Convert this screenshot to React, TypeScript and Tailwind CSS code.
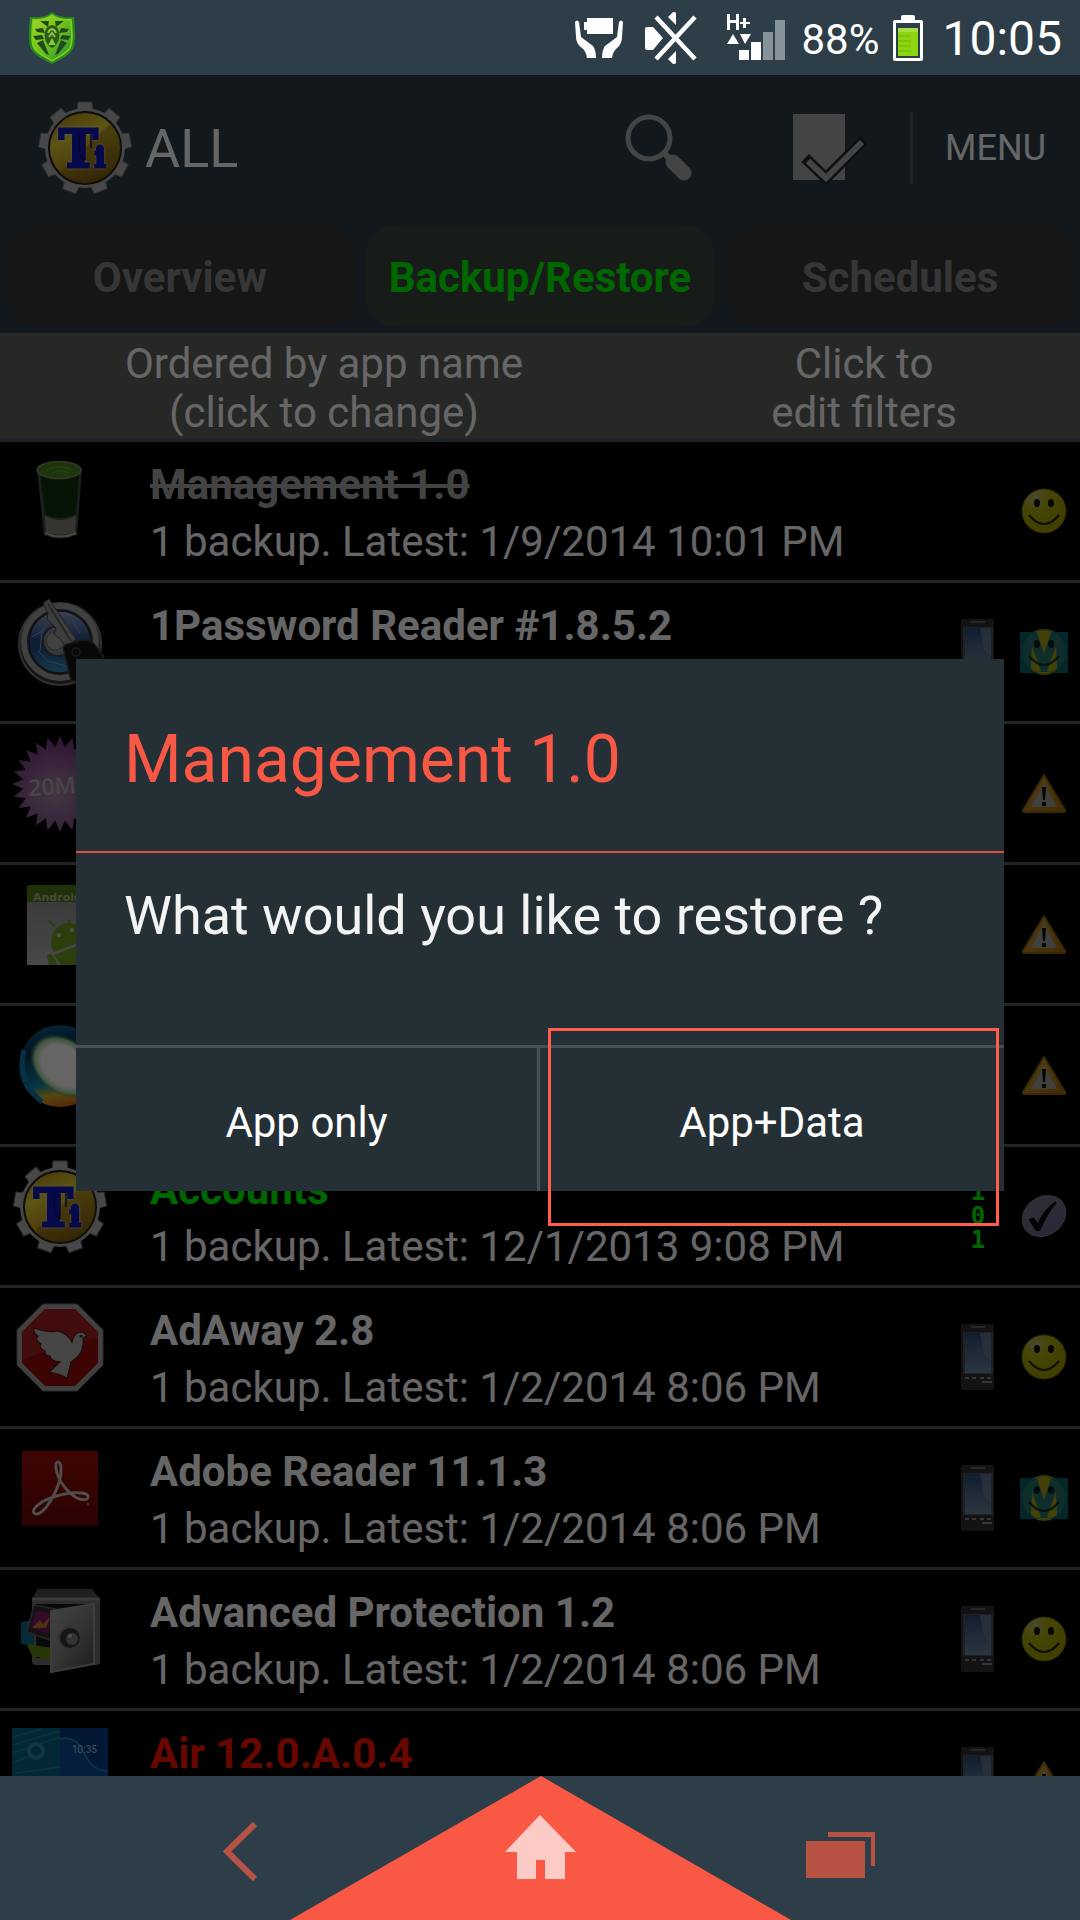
import React from 'react';

/* ---------- geometry helpers ---------- */

function burst(points: number, outer: number, inner: number): string {
  const out: string[] = [];
  for (let i = 0; i < points * 2; i++) {
    const r = i % 2 === 0 ? outer : inner;
    const a = (Math.PI * i) / points - Math.PI / 2;
    out.push(`${(48 + r * Math.cos(a)).toFixed(1)},${(48 + r * Math.sin(a)).toFixed(1)}`);
  }
  return out.join(' ');
}

const GEAR_TEETH = [0, 40, 80, 120, 160, 200, 240, 280, 320];

/* ---------- status bar icons ---------- */

function ShieldIcon() {
  return (
    <svg width="48" height="54" viewBox="0 0 48 54" aria-hidden="true">
      <defs>
        <linearGradient id="shield" x1="0" y1="0" x2="1" y2="1">
          <stop offset="0" stopColor="#a8d820" />
          <stop offset="0.5" stopColor="#6fc01c" />
          <stop offset="1" stopColor="#22902e" />
        </linearGradient>
      </defs>
      <path d="M24 1 C18 6 9 7 2 6 C1 20 0 32 3 38 C8 46 17 49 24 53 C31 49 40 46 45 38 C48 32 47 20 46 6 C39 7 30 6 24 1Z" fill="#2c8a1c" />
      <path d="M24 4 C18 8 11 9 5 8.500 C4 20 3 31 6 37 C10 43 18 46 24 50 C30 46 38 43 42 37 C45 31 44 20 43 8.500 C37 9 30 8 24 4Z" fill="url(#shield)" stroke="#7cd024" strokeWidth="1.500" />
      <path d="M12 10 L21 10 L20 16Z M36 10 L27 10 L28 16Z M7 18 L15 17 L17 22 L9 21Z M41 18 L33 17 L31 22 L39 21Z M5 25 L14 24 L16 28 L8 29Z M43 25 L34 24 L32 28 L40 29Z M9 32 L15 29 L21 44 L18 43Z M39 32 L33 29 L27 44 L30 43Z" fill="#1f4a1c" />
      <path d="M24 14 C17 15 16 22 17 28 C18 33 22 36 24 37 C26 36 30 33 31 28 C32 22 31 15 24 14Z" fill="#2c5a1c" />
      <path d="M20 22 C22 17 26 17 28 22 M21 26 L24 22 L27 26 M22 33 L24 29 L26 33Z" fill="none" stroke="#8cc83a" strokeWidth="2" />
    </svg>
  );
}

function PowerSavingIcon() {
  return (
    <svg width="48" height="40" viewBox="0 0 48 40" aria-hidden="true" fill="#fff">
      <path d="M12 0H38V16H12V12H9V4H12Z" />
      <path d="M0 4Q2 1 4 4L6 19L18 28Q21 32 21 40H12Q11 33 7 30Q1 26 1 19Z" />
      <path d="M48 4Q46 1 44 4L42 19L30 28Q27 32 27 40H37Q38 33 42 30Q47 26 47 19Z" />
    </svg>
  );
}

function MuteIcon() {
  return (
    <svg width="52" height="52" viewBox="0 0 52 52" aria-hidden="true">
      <path d="M0 17Q0 15 2 15H8L18 26L8 38H2Q0 38 0 36Z M23 5L28 0Q31 0 31 1V13Z M23 47L28 52Q31 52 31 51V39Z" fill="#fff" />
      <path d="M11 5L50 47M50 5L11 47" stroke="#fff" strokeWidth="4.500" />
    </svg>
  );
}

function SignalIcon() {
  return (
    <svg width="60" height="48" viewBox="0 0 60 48" aria-hidden="true" fill="#fff">
      <path d="M1 0H4V6H10V0H13V16H10V9H4V16H1Z M17 4H20V8H24V10H20V14H17V10H14V8H17Z" />
      <path d="M1 30L7 20L13 30Z M14 20H25L19 30Z" />
      <path d="M13 36H23V46H13Z M25 28H35V46H25Z" />
      <path d="M37 18H47V46H37Z M49 6H59V46H49Z" fill="#87939a" />
    </svg>
  );
}

function BatteryIcon() {
  return (
    <svg width="30" height="46" viewBox="0 0 30 46" aria-hidden="true">
      <path d="M8 2Q8 0 10 0H20Q22 0 22 2V5H28Q30 5 30 7V44Q30 46 28 46H2Q0 46 0 44V7Q0 5 2 5H8Z" fill="#fff" />
      <path d="M3 8H27V43H3Z" fill="#2d3e48" />
      <path d="M5 13H25V41H5Z" fill="#8ed40f" />
      <path d="M5 13H25V17H5Z" fill="#a9dd45" />
      <path d="M5 21H18M5 26H18M5 31H18M5 36H18" stroke="#6fb80c" />
    </svg>
  );
}

/* ---------- app bar icons ---------- */

function SearchIcon() {
  return (
    <svg width="72" height="72" viewBox="0 0 72 72" aria-hidden="true">
      <circle cx="26" cy="26" r="21" fill="none" stroke="#a8aaaa" strokeWidth="5" />
      <path d="M41 41L46 46" stroke="#a8aaaa" strokeWidth="6" />
      <path d="M50 50L61 61" stroke="#a8aaaa" strokeWidth="15" strokeLinecap="round" />
      <path d="M43 47L47 43" stroke="#a8aaaa" strokeWidth="6" />
    </svg>
  );
}

function BatchIcon() {
  return (
    <svg width="76" height="72" viewBox="0 0 76 72" aria-hidden="true">
      <path d="M2 2H54V68H2Z" fill="#a8aaaa" />
      <path d="M14 46L35 66L73 28" fill="none" stroke="#20292d" strokeWidth="11" />
      <path d="M17 49L35 66L71 30" fill="none" stroke="#a8aaaa" strokeWidth="6" />
    </svg>
  );
}

/* ---------- application icons ---------- */

function TitaniumIcon({ id }: { id: string }) {
  return (
    <svg viewBox="0 0 96 96" className="size-24 shrink-0" aria-hidden="true">
      <defs>
        <linearGradient id={id} x1="0.2" y1="0" x2="0.6" y2="1">
          <stop offset="0" stopColor="#b88c18" />
          <stop offset="0.35" stopColor="#e8d030" />
          <stop offset="0.7" stopColor="#c09a20" />
          <stop offset="1" stopColor="#8a6814" />
        </linearGradient>
      </defs>
      {GEAR_TEETH.map((a) => (
        <path key={a} d="M40 12L41 2H55L56 12Z" fill="#b4b4b4" stroke="#747474" strokeWidth="1" transform={`rotate(${a} 48 48)`} />
      ))}
      <circle cx="48" cy="48" r="40" fill="#aeaeae" />
      <circle cx="48" cy="48" r="36" fill={`url(#${id})`} stroke="#1c1c1c" strokeWidth="2" />
      <path d="M74 23A36 36 0 0 1 22 73Z" fill="#6a4c08" fillOpacity="0.35" />
      <text
        x="22"
        y="67"
        fontFamily="'DejaVu Serif', serif"
        fontWeight="700"
        fontSize="52"
        fill="#1018b8"
        stroke="#1018b8"
        strokeWidth="3"
        className="drop-shadow-[0_0_1px_#f4e8d8]"
      >
        T<tspan fontSize="28" dx="-3">i</tspan>
      </text>
      <path d="M42 34V52M48 34V60M42 54L48 60M54 34V48" stroke="#0a0f70" strokeWidth="1.500" fill="none" />
    </svg>
  );
}

function GlassIcon() {
  return (
    <svg viewBox="0 0 96 96" className="size-24 shrink-0" aria-hidden="true">
      <path d="M25 15Q47 5 70 15L65 81Q48 88 32 81Z" fill="#485048" />
      <path d="M28 18H67L64 60Q48 68 33 60Z" fill="#10340f" />
      <path d="M33 62Q48 70 64 62L63 78Q48 84 34 78Z" fill="#84867e" />
      <path d="M33 79Q48 86 64 79" stroke="#b4b4a8" strokeWidth="2" fill="none" />
      <ellipse cx="47" cy="16" rx="22" ry="8.500" fill="#4c8420" stroke="#7c8c68" strokeWidth="1.500" />
      <path d="M34 17Q46 9 60 16M40 19Q52 15 56 19" stroke="#609c34" fill="none" strokeWidth="1.500" />
    </svg>
  );
}

function OnePasswordIcon() {
  return (
    <svg viewBox="0 0 96 96" className="size-24 shrink-0" aria-hidden="true">
      <defs>
        <linearGradient id="onepw" x1="0" y1="0" x2="0" y2="1">
          <stop offset="0" stopColor="#94a4c4" />
          <stop offset="0.45" stopColor="#2c508c" />
          <stop offset="0.55" stopColor="#1c4880" />
          <stop offset="1" stopColor="#3c8cc4" />
        </linearGradient>
      </defs>
      <circle cx="48" cy="49" r="41" fill="#383838" stroke="#787878" strokeWidth="2" />
      <circle cx="48" cy="47" r="36" fill="none" stroke="#a0a0a0" strokeWidth="6" />
      <circle cx="48" cy="47" r="31" fill="url(#onepw)" stroke="#242c38" strokeWidth="1.500" />
      <path d="M20 42L30 36L38 24M26 56L36 66L58 72L72 56M30 36L28 56M60 26L68 38" stroke="#7ca4d4" fill="none" strokeWidth="1" />
      <circle cx="46" cy="46" r="15" fill="#888c90" stroke="#404448" strokeWidth="2" />
      <circle cx="43" cy="46" r="9" fill="#a4a4a4" stroke="#646464" />
      <path d="M31 8L37 4L64 44L54 52L48 44L42 39L44 33L35 24L36 18Z" fill="#989898" stroke="#484848" strokeWidth="1" />
      <path d="M36 9L59 46" stroke="#606060" strokeWidth="2" />
      <path d="M52 56Q50 50 56 49L72 45Q79 45 83 50L92 62L66 86Q60 88 58 82Z" fill="#141414" stroke="#3c3c3c" strokeWidth="1.500" />
      <circle cx="64" cy="57" r="4" fill="none" stroke="#383838" strokeWidth="2" />
    </svg>
  );
}

function BurstIcon() {
  return (
    <svg viewBox="0 0 96 96" className="size-24 shrink-0" aria-hidden="true">
      <defs>
        <radialGradient id="burst" cx="0.45" cy="0.6" r="0.55">
          <stop offset="0" stopColor="#a888a8" />
          <stop offset="1" stopColor="#783e82" />
        </radialGradient>
      </defs>
      <polygon points={burst(24, 48, 37)} fill="url(#burst)" />
      <text x="16" y="58" fontSize="23" fontWeight="600" fontFamily="'Open Sans', sans-serif" fill="#b4acb4" transform="rotate(-4 48 48)">20M</text>
    </svg>
  );
}

function AndroidCardIcon() {
  return (
    <svg viewBox="0 0 96 96" className="size-24 shrink-0" aria-hidden="true">
      <defs>
        <linearGradient id="card" x1="0" y1="0" x2="0" y2="1">
          <stop offset="0" stopColor="#8c8c8c" />
          <stop offset="1" stopColor="#b4b4b4" />
        </linearGradient>
      </defs>
      <path d="M15 12Q15 8 19 8H82V88H15Z" fill="url(#card)" />
      <path d="M15 12Q15 8 19 8H82V25H15Z" fill="#527a18" />
      <text x="21" y="24" fontSize="11" fontWeight="700" fontFamily="'DejaVu Sans', sans-serif" fill="#a8b890">Android</text>
      <path d="M39 69Q38 49 56 46Q70 46 76 56V62L42 75Z M35 79Q38 75 41 79L46 88H37Z M42 78L78 64V88H49Z" fill="#6f9c20" />
      <path d="M37 43L43 50M57 42V48" stroke="#6f9c20" strokeWidth="2" />
      <circle cx="47" cy="58" r="2" fill="#c8c8c8" />
      <circle cx="60" cy="53" r="2" fill="#c8c8c8" />
    </svg>
  );
}

function OrbIcon() {
  return (
    <svg viewBox="0 0 96 96" className="size-24 shrink-0" aria-hidden="true">
      <defs>
        <linearGradient id="orb" x1="0.3" y1="0" x2="0.5" y2="1">
          <stop offset="0" stopColor="#0c5c90" />
          <stop offset="0.3" stopColor="#08304c" />
          <stop offset="0.7" stopColor="#0c88a8" />
          <stop offset="0.85" stopColor="#d8b028" />
          <stop offset="1" stopColor="#d86c10" />
        </linearGradient>
        <radialGradient id="orbGlow">
          <stop offset="0.65" stopColor="#fff" />
          <stop offset="0.85" stopColor="#a8d498" />
          <stop offset="1" stopColor="#0c7c6c" stopOpacity="0" />
        </radialGradient>
      </defs>
      <circle cx="48" cy="48" r="41" fill="url(#orb)" />
      <path d="M12 32Q4 62 30 84" stroke="#1078b0" strokeWidth="5" fill="none" />
      <ellipse cx="52" cy="48" rx="38" ry="28" fill="url(#orbGlow)" transform="rotate(38 52 48)" />
    </svg>
  );
}

function AdAwayIcon() {
  return (
    <svg viewBox="0 0 96 96" className="size-24 shrink-0" aria-hidden="true">
      <path d="M31 4H65L91 30V65L65 91H31L5 65V30Z" fill="#a0a0a0" stroke="#707070" strokeWidth="1" />
      <path d="M33 9H63L86 32V63L63 86H33L10 63V32Z" fill="#980c0c" />
      <path d="M33 9H63L86 32V38Q48 44 10 60V32Z" fill="#a4201c" />
      <path d="M22 28Q36 33 46 31Q56 34 60 42Q62 32 69 32Q72 32 75 36L71 38Q73 54 59 62Q58 68 55 78Q48 74 37 72L48 62Q38 61 38 56Q32 56 33 51Q26 48 29 44Q22 40 26 36Q20 32 22 28Z" fill="#acaca8" stroke="#48120e" strokeWidth="1.200" />
      <circle cx="69" cy="36" r="1.500" fill="#333" />
    </svg>
  );
}

function AdobeIcon() {
  return (
    <svg viewBox="0 0 96 96" className="size-24 shrink-0" aria-hidden="true">
      <defs>
        <linearGradient id="adobe" x1="0" y1="0" x2="0" y2="1">
          <stop offset="0" stopColor="#a00e08" />
          <stop offset="1" stopColor="#6c0606" />
        </linearGradient>
      </defs>
      <path d="M10 10H86V85H10Z" fill="url(#adobe)" />
      <path d="M22 72C26 76 34 68 39 59C45 49 50 38 49 26C48 18 43 20 44 27C45 39 56 52 65 57C71 60 77 59 76 55C75 52 66 51 58 52C46 54 37 57 30 61C24 65 20 69 22 72Z" fill="none" stroke="#c8c0c0" strokeWidth="2.800" />
      <circle cx="76" cy="63" r="1" fill="#c8c0c0" />
    </svg>
  );
}

function SafeIcon() {
  return (
    <svg viewBox="0 0 96 96" className="size-24 shrink-0" aria-hidden="true">
      <defs>
        <linearGradient id="safe" x1="0" y1="0" x2="1" y2="1">
          <stop offset="0" stopColor="#a8a8a8" />
          <stop offset="0.5" stopColor="#848484" />
          <stop offset="1" stopColor="#484848" />
        </linearGradient>
      </defs>
      <path d="M20 18L26 7H80L88 18V80Q88 83 84 83H24Q20 83 20 79Z" fill="#707070" />
      <path d="M26 7H80L88 17H20Z" fill="#505050" />
      <path d="M20 17H88" stroke="#909090" strokeWidth="3" />
      <path d="M24 22H82V76H24Z" fill="#181818" />
      <path d="M9 40L22 38V64L9 62Z" fill="#0c6c8c" />
      <path d="M15 62L40 66V78L20 74Z" fill="#5c8c10" />
      <path d="M22 23L44 27L38 58L15 50Z" fill="#302c34" stroke="#5c5864" strokeWidth="1.500" />
      <path d="M24 29L40 31L36 52L20 46Z" fill="#7c1c64" />
      <path d="M20 46L28 38L31 42L39 34L34 46Z" fill="#c87430" />
      <path d="M39 29L82 22V82L39 90Z" fill="url(#safe)" stroke="#989898" strokeWidth="2" />
      <circle cx="58" cy="56" r="11" fill="#383838" stroke="#7c7c7c" strokeWidth="2" />
      <circle cx="60" cy="57" r="6" fill="#808080" />
      <circle cx="58" cy="54" r="2" fill="#c8c8c8" />
    </svg>
  );
}

function AirIcon() {
  return (
    <svg viewBox="0 0 96 96" className="size-24 shrink-0" aria-hidden="true">
      <path d="M0 5H48V96H0Z" fill="#086484" />
      <path d="M48 5H96V96H48Z" fill="#083c84" />
      <path d="M0 22L48 8M0 30L48 14M0 40L20 32M0 14L30 6M4 50L48 44" stroke="#1480a0" strokeWidth="1.500" />
      <circle cx="24" cy="28" r="7" fill="none" stroke="#3488a4" strokeWidth="4" />
      <path d="M48 16Q64 12 72 30T96 48V96H48Z" fill="#0c4c94" />
      <path d="M48 16Q64 12 72 30T96 48" stroke="#2c80b8" fill="none" strokeWidth="1.500" />
      <text x="60" y="30" fontSize="10" fontFamily="Roboto, sans-serif" fill="#a8c4dc">10:35</text>
    </svg>
  );
}

/* ---------- row status icons ---------- */

function PhoneIcon() {
  return (
    <svg viewBox="0 0 48 66" className="h-[66px] w-12 shrink-0" aria-hidden="true">
      <defs>
        <linearGradient id="screen" x1="0" y1="0" x2="0" y2="1">
          <stop offset="0" stopColor="#2c4c78" />
          <stop offset="1" stopColor="#6888a0" />
        </linearGradient>
      </defs>
      <rect x="7" y="0" width="33" height="66" rx="2" fill="#303030" />
      <path d="M17 3H31" stroke="#747474" strokeWidth="1.500" />
      <path d="M9 8H39V50H9Z" fill="#50545c" />
      <path d="M11 9H37V49H11Z" fill="url(#screen)" />
      <path d="M26 9H37V38L30 30Z" fill="#78889c" fillOpacity="0.6" />
      <path d="M11 54H15M18 54H22M26 54H30M33 54H37M28 58H38" stroke="#888" strokeWidth="2" />
    </svg>
  );
}

function BinaryIcon() {
  return (
    <p className="w-12 shrink-0 text-center font-['DejaVu_Sans_Mono',monospace] text-[24px] font-bold leading-6 text-[#00ff00]">
      1<br />0<br />1
    </p>
  );
}

function Smiley({ id }: { id: string }) {
  return (
    <svg viewBox="0 0 48 48" className="size-12 shrink-0" aria-hidden="true">
      <defs>
        <radialGradient id={id} cx="0.3" cy="0.2" r="0.8">
          <stop offset="0" stopColor="#b8b478" />
          <stop offset="0.4" stopColor="#b0ac08" />
          <stop offset="1" stopColor="#a09c00" />
        </radialGradient>
      </defs>
      <circle cx="24" cy="24" r="22" fill={`url(#${id})`} stroke="#74700c" />
      <ellipse cx="17" cy="16" rx="3" ry="4" fill="#0c0c00" />
      <ellipse cx="31" cy="16" rx="3" ry="4" fill="#0c0c00" />
      <path d="M9 28Q24 46 39 28" fill="none" stroke="#242400" strokeWidth="2" />
    </svg>
  );
}

function MarketSmiley() {
  return (
    <svg viewBox="0 0 48 48" className="size-12 shrink-0" aria-hidden="true">
      <circle cx="24" cy="24" r="23" fill="#8c8c24" />
      <path d="M0 4H48V45H0Z" fill="#086068" />
      <circle cx="24" cy="24" r="22" fill="#24706c" />
      <path d="M17 4Q24 0 31 4L24 26Z M12 18L21 43Q15 46 11 40Z M36 18L27 43Q33 46 37 40Z M17 44H31Q24 48 17 44Z" fill="#a8a018" />
      <ellipse cx="17" cy="16" rx="3" ry="4" fill="#081c20" />
      <ellipse cx="31" cy="16" rx="3" ry="4" fill="#081c20" />
      <path d="M9 28Q24 46 39 28" fill="none" stroke="#14341c" strokeWidth="2" />
    </svg>
  );
}

function WarningIcon() {
  return (
    <svg viewBox="0 0 48 48" className="size-12 shrink-0" aria-hidden="true">
      <defs>
        <linearGradient id="warn" x1="0" y1="0" x2="1" y2="1">
          <stop offset="0" stopColor="#c8a040" />
          <stop offset="1" stopColor="#a86c08" />
        </linearGradient>
      </defs>
      <path d="M24 6L45 41Q46 43 44 43H4Q2 43 3 41Z" fill="url(#warn)" stroke="#906410" strokeWidth="2" strokeLinejoin="round" />
      <path d="M24 14L37 38H11Z" fill="#a0a098" />
      <path d="M22 18H26L25 31H23Z M22 33H26V37H22Z" fill="#101010" />
    </svg>
  );
}

function TickIcon() {
  return (
    <svg viewBox="0 0 48 48" className="size-12 shrink-0" aria-hidden="true">
      <defs>
        <linearGradient id="tick" x1="0" y1="0" x2="0" y2="1">
          <stop offset="0" stopColor="#787488" />
          <stop offset="1" stopColor="#646490" />
        </linearGradient>
      </defs>
      <ellipse cx="24" cy="24" rx="23" ry="19" fill="url(#tick)" stroke="#807c98" transform="rotate(-35 24 24)" />
      <path d="M10 28Q13 25 15 29L18 33Q24 18 36 10Q26 22 20 37Q17 40 15 36Z" fill="#0c0c10" stroke="#0c0c10" strokeWidth="2" />
    </svg>
  );
}

/* ---------- data ---------- */

type Row = {
  icon: React.ReactNode;
  title?: string;
  titleClass?: string;
  detail?: string;
  storage?: React.ReactNode;
  state: React.ReactNode;
};

const ROWS: Row[] = [
  { icon: <GlassIcon />, title: 'Management 1.0', titleClass: 'text-[#a8a8a8] line-through', detail: '1 backup. Latest: 1/9/2014 10:01 PM', state: <Smiley id="smile1" /> },
  { icon: <OnePasswordIcon />, title: '1Password Reader #1.8.5.2', storage: <PhoneIcon />, state: <MarketSmiley /> },
  { icon: <BurstIcon />, state: <WarningIcon /> },
  { icon: <AndroidCardIcon />, state: <WarningIcon /> },
  { icon: <OrbIcon />, state: <WarningIcon /> },
  { icon: <TitaniumIcon id="goldRow" />, title: 'Accounts', titleClass: 'text-[#00ff00]', detail: '1 backup. Latest: 12/1/2013 9:08 PM', storage: <BinaryIcon />, state: <TickIcon /> },
  { icon: <AdAwayIcon />, title: 'AdAway 2.8', detail: '1 backup. Latest: 1/2/2014 8:06 PM', storage: <PhoneIcon />, state: <Smiley id="smile2" /> },
  { icon: <AdobeIcon />, title: 'Adobe Reader 11.1.3', detail: '1 backup. Latest: 1/2/2014 8:06 PM', storage: <PhoneIcon />, state: <MarketSmiley /> },
  { icon: <SafeIcon />, title: 'Advanced Protection 1.2', detail: '1 backup. Latest: 1/2/2014 8:06 PM', storage: <PhoneIcon />, state: <Smiley id="smile3" /> },
  { icon: <AirIcon />, title: 'Air 12.0.A.0.4', titleClass: 'text-[#ff1400]', storage: <PhoneIcon />, state: <WarningIcon /> },
];

/* ---------- page sections ---------- */

function StatusBar() {
  return (
    <header className="flex h-[75px] shrink-0 items-center bg-[#2d3e48] pl-7 pr-[18px] text-white">
      <ShieldIcon />
      <div className="ml-auto flex items-center">
        <PowerSavingIcon />
        <div className="ml-[22px]"><MuteIcon /></div>
        <div className="ml-[29px]"><SignalIcon /></div>
        <span className="ml-[15px] pt-[3px] text-[42px] leading-[49px]">88%</span>
        <div className="ml-[14px]"><BatteryIcon /></div>
        <time className="ml-[19px] pt-[3px] text-[48px] leading-[56px]">10:05</time>
      </div>
    </header>
  );
}

function AppBar() {
  return (
    <div className="flex h-[150px] items-center bg-[#2d3e46] pb-1 pl-[37px] text-white">
      <TitaniumIcon id="goldBar" />
      <h1 className="ml-3 text-[54px] leading-[63px]">ALL</h1>
      <div className="ml-auto flex items-center">
        <button type="button" aria-label="Search" className="mr-24"><SearchIcon /></button>
        <button type="button" aria-label="Batch actions" className="mr-[43px]"><BatchIcon /></button>
        <button type="button" className="h-[72px] border-l-[3px] border-[#4b5860] pl-8 pr-[34px] text-[36px] leading-[42px]">MENU</button>
      </div>
    </div>
  );
}

function Tabs() {
  const tab = 'h-[102px] rounded-[30px] pt-[2px] text-[42px] font-bold leading-[49px]';
  return (
    <nav className="grid grid-cols-3 gap-3 bg-[#2d3e46] px-[6px] pb-[6px]">
      <button type="button" className={`${tab} bg-[#393939] text-[#888888]`}>Overview</button>
      <button type="button" className={`${tab} bg-[#3c463c] text-[#00ff00]`}>Backup/Restore</button>
      <button type="button" className={`${tab} bg-[#393939] text-[#888888]`}>Schedules</button>
    </nav>
  );
}

function Filters() {
  return (
    <div className="flex border-b-[3px] border-[#4b5a67] bg-[#5f645f] text-[42px] leading-[49px] text-white">
      <button type="button" className="w-3/5 pb-[2px] pt-[6px]">Ordered by app name<br />(click to change)</button>
      <button type="button" className="w-2/5 pb-[2px] pt-[6px]">Click to<br />edit filters</button>
    </div>
  );
}

function AppList() {
  return (
    <ul className="bg-black">
      {ROWS.map((row, i) => (
        <li key={i} className="flex h-[141px] items-center border-b-[3px] border-[#4e5c67] px-3">
          <div className="self-start pt-3">{row.icon}</div>
          <div className="ml-[42px] min-w-0 flex-1 self-start whitespace-nowrap pt-[14px] text-[42px] text-white">
            {row.title && <h2 className={`font-bold leading-[58px] ${row.titleClass ?? ''}`}>{row.title}</h2>}
            {row.detail && <p className="leading-[56px]">{row.detail}</p>}
          </div>
          {row.storage}
          <div className="ml-[18px]">{row.state}</div>
        </li>
      ))}
    </ul>
  );
}

function RestoreDialog() {
  return (
    <section role="dialog" aria-modal="true" aria-labelledby="dialog-title" className="w-full bg-[#253036]">
      <h2 id="dialog-title" className="flex h-48 items-center px-12 pt-2 text-[66px] leading-[77px] text-[#f95944]">Management 1.0</h2>
      <p className="h-[194px] border-t-2 border-[#d9503f] px-12 pt-[31px] text-[54px] leading-[63px] text-[#f3f3f3]">What would you like to restore ?</p>
      <div className="grid h-[146px] grid-cols-2 border-t-[3px] border-[#434f55] text-[42px] leading-[49px] text-white">
        <button type="button" className="border-r-[3px] border-[#434f55] pt-[5px]">App only</button>
        <button type="button" className="relative pt-[5px]">
          App+Data
          <span className="absolute -bottom-[35px] -top-5 left-2 right-[5px] border-[3px] border-[#ff5f49] shadow-sm" />
        </button>
      </div>
    </section>
  );
}

function NavBar() {
  return (
    <nav className="flex h-36 shrink-0 justify-center bg-[#2d3e48]">
      <button type="button" aria-label="Back" className="w-[98px]">
        <svg width="98" height="144" viewBox="0 0 98 144" aria-hidden="true">
          <path d="M64 48L36 75.500L64 103" fill="none" stroke="#b85245" strokeWidth="6" />
        </svg>
      </button>
      <button type="button" aria-label="Home" className="w-[502px]">
        <svg width="502" height="144" viewBox="0 0 502 144" aria-hidden="true">
          <path d="M252 0L502 144H1Z" fill="#f95944" />
          <path d="M251 39L287 76H276V103H256V84H247V103H228V76H216Z" fill="#fccbc6" />
        </svg>
      </button>
      <button type="button" aria-label="Recent apps" className="w-[98px]">
        <svg width="98" height="144" viewBox="0 0 98 144" aria-hidden="true" fill="#b85245">
          <path d="M15 65H74V102H15Z M37 56H84V90H80V61H37Z" />
        </svg>
      </button>
    </nav>
  );
}

export default function App() {
  return (
    <div className="flex h-screen flex-col overflow-hidden bg-black font-['Roboto',sans-serif]">
      <StatusBar />
      <main className="relative min-h-0 flex-1 overflow-hidden">
        <AppBar />
        <Tabs />
        <Filters />
        <AppList />
        <div className="absolute inset-0 flex items-center bg-black/60 px-[76px] pb-px">
          <RestoreDialog />
        </div>
      </main>
      <NavBar />
    </div>
  );
}
